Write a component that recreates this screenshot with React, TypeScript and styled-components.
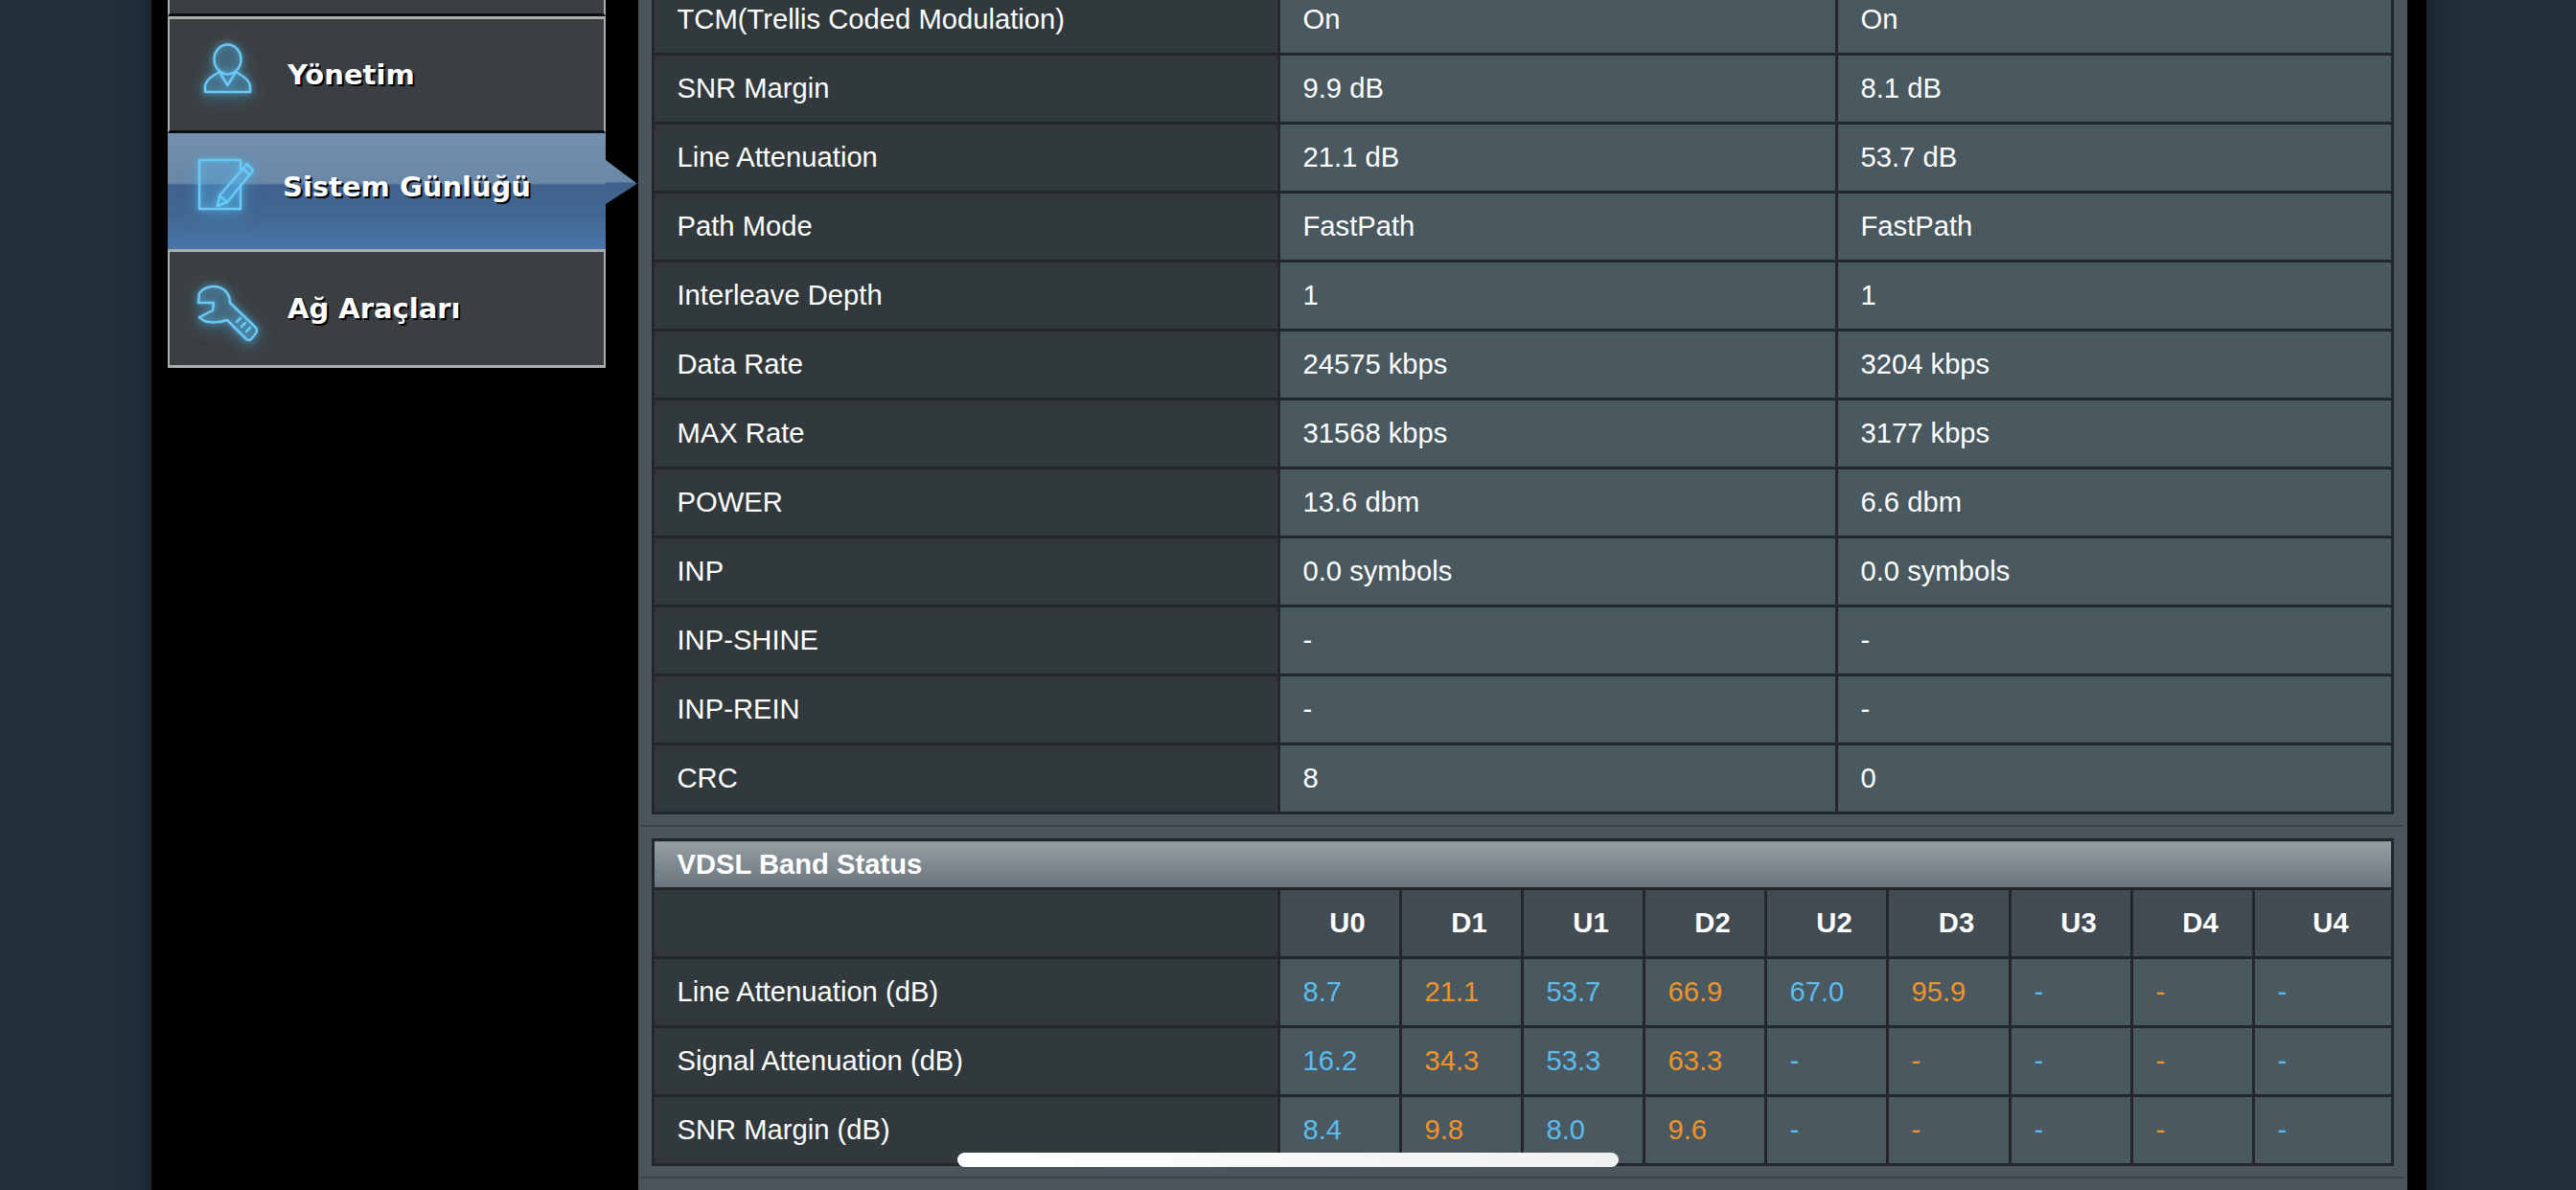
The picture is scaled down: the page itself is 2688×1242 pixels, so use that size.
import React from "react";
import styled, { createGlobalStyle } from "styled-components";

const GlobalStyle = createGlobalStyle`
  html, body {
    margin: 0;
    height: 1242px;
    overflow: hidden;
    background: #212f3a;
  }
`;

const statusRows = [
  ["TCM(Trellis Coded Modulation)", "On", "On"],
  ["SNR Margin", "9.9 dB", "8.1 dB"],
  ["Line Attenuation", "21.1 dB", "53.7 dB"],
  ["Path Mode", "FastPath", "FastPath"],
  ["Interleave Depth", "1", "1"],
  ["Data Rate", "24575 kbps", "3204 kbps"],
  ["MAX Rate", "31568 kbps", "3177 kbps"],
  ["POWER", "13.6 dbm", "6.6 dbm"],
  ["INP", "0.0 symbols", "0.0 symbols"],
  ["INP-SHINE", "-", "-"],
  ["INP-REIN", "-", "-"],
  ["CRC", "8", "0"],
];

const bands = ["U0", "D1", "U1", "D2", "U2", "D3", "U3", "D4", "U4"];

const bandRows = [
  ["Line Attenuation (dB)", "8.7", "21.1", "53.7", "66.9", "67.0", "95.9", "-", "-", "-"],
  ["Signal Attenuation (dB)", "16.2", "34.3", "53.3", "63.3", "-", "-", "-", "-", "-"],
  ["SNR Margin (dB)", "8.4", "9.8", "8.0", "9.6", "-", "-", "-", "-", "-"],
];

const statusCols = [653, 582, 580];
const bandCols = [653, 127, 127, 127, 127, 127, 128, 127, 127, 145];

const PersonIcon = () => (
  <IconSvg width="51" height="53" viewBox="0 0 51 53" $shift={-13}>
    <ellipse cx="25.5" cy="17" rx="14" ry="15.5" />
    <path d="M2 51V45C3 38 10 34 17 30L25.5 44L34 30C41 34 48 38 49 45V51Z" />
  </IconSvg>
);

const NoteIcon = () => (
  <IconSvg width="60" height="55" viewBox="0 0 60 55" $shift={-14}>
    <path d="M45 11V2H2V53H45V28" />
    <path d="M52 6L58 13L31 46L21 50L23 39Z" />
    <path d="M48 11L54 18M23 39L31 46" />
  </IconSvg>
);

const WrenchIcon = () => (
  <IconSvg width="64" height="60" viewBox="0 0 64 60" $shift={12}>
    <path d="M3 8C7 3 12 1 18 1C28 1 35 8 35 18L62 44Q64 47 62 50L57 56Q55 58 52 56L32 36C24 39 14 39 8 37L3 33L17 26L18 18L2 18Z" />
    <path d="M42 38L46 34M47 43L51 39M52 48L56 44" />
  </IconSvg>
);

const App = () => {
  return (
    <>
      <GlobalStyle />
      <Frame>
        <Sidebar>
          <MenuItem />
          <MenuItem>
            <IconSlot>
              <PersonIcon />
            </IconSlot>
            <MenuLabel>Yönetim</MenuLabel>
          </MenuItem>
          <MenuItem $active>
            <IconSlot>
              <NoteIcon />
            </IconSlot>
            <MenuLabel $active>Sistem Günlüğü</MenuLabel>
          </MenuItem>
          <MenuItem>
            <IconSlot>
              <WrenchIcon />
            </IconSlot>
            <MenuLabel>Ağ Araçları</MenuLabel>
          </MenuItem>
        </Sidebar>
        <Panel>
          <Section>
            <Table>
              <colgroup>
                {statusCols.map((w, i) => (
                  <col key={i} width={w} />
                ))}
              </colgroup>
              <tbody>
                {statusRows.map((row) => (
                  <tr key={row[0]}>
                    <LabelCell>{row[0]}</LabelCell>
                    <ValueCell>{row[1]}</ValueCell>
                    <ValueCell>{row[2]}</ValueCell>
                  </tr>
                ))}
              </tbody>
            </Table>
          </Section>
          <Section>
            <Table>
              <colgroup>
                {bandCols.map((w, i) => (
                  <col key={i} width={w} />
                ))}
              </colgroup>
              <thead>
                <tr>
                  <TitleCell colSpan={10}>VDSL Band Status</TitleCell>
                </tr>
                <tr>
                  <LabelCell />
                  {bands.map((b) => (
                    <HeadCell key={b}>{b}</HeadCell>
                  ))}
                </tr>
              </thead>
              <tbody>
                {bandRows.map((row) => (
                  <tr key={row[0]}>
                    <LabelCell>{row[0]}</LabelCell>
                    {row.slice(1).map((v, i) => (
                      <ValueCell key={i} $tone={i % 2 === 0 ? "up" : "down"}>
                        {v}
                      </ValueCell>
                    ))}
                  </tr>
                ))}
              </tbody>
            </Table>
          </Section>
          <ButtonRow>
            <ApplyButton />
          </ButtonRow>
        </Panel>
      </Frame>
      <ScrollBar />
    </>
  );
};

export default App;

const Frame = styled.div`
  display: flex;
  width: 2374px;
  height: 1400px;
  margin: -105px 0 0 158px;
  background: #000;
  box-shadow: 0 0 24px rgba(10, 18, 24, 0.55);
  font-family: "Liberation Sans", Arial, sans-serif;
`;

const Sidebar = styled.nav`
  flex: none;
  width: 508px;
  padding-left: 17px;
  box-sizing: border-box;
`;

const MenuItem = styled.div<{ $active?: boolean }>`
  position: relative;
  display: flex;
  align-items: center;
  box-sizing: border-box;
  width: 457px;
  height: ${(p) => (p.$active ? "121px" : "122px")};
  padding-left: ${(p) => (p.$active ? "29px" : "28px")};
  gap: 31px;
  background: ${(p) =>
    p.$active
      ? "linear-gradient(180deg, #7490ae 0%, #6a87a6 43%, #3f628c 45%, #426790 70%, #4a74a8 100%)"
      : "#3b3f42"};
  border: ${(p) => (p.$active ? "none" : "solid #a9afad")};
  border-width: 3px 2px 3px 2px;
  border-bottom-color: #0c0d0e;

  &:last-child {
    height: 124px;
    border-bottom-color: #a9afad;
  }

  ${(p) =>
    p.$active &&
    `
    &::after {
      content: "";
      position: absolute;
      left: 100%;
      top: 28px;
      width: 33px;
      height: 46px;
      background: linear-gradient(180deg, #6f8cab 0%, #6a87a6 50%, #3f628c 52%, #42668f 100%);
      clip-path: polygon(0 0, 100% 54%, 0 100%);
    }
  `}
`;

const IconSlot = styled.div`
  flex: none;
  display: flex;
  justify-content: center;
  width: 64px;
`;

const IconSvg = styled.svg<{ $shift: number }>`
  flex: none;
  margin-top: ${(p) => p.$shift}px;
  fill: rgba(90, 190, 240, 0.12);
  stroke: #6cc8f5;
  stroke-width: 2.5;
  stroke-linejoin: round;
  stroke-linecap: round;
  overflow: visible;
  filter: drop-shadow(0 0 3px rgba(90, 190, 240, 0.8)) drop-shadow(0 4px 8px rgba(70, 170, 230, 0.6));
`;

const MenuLabel = styled.span<{ $active?: boolean }>`
  margin: ${(p) => (p.$active ? "-9px 0 0 -4px" : "0")};
  font-family: "DejaVu Sans", Verdana, sans-serif;
  font-size: 29px;
  font-weight: 700;
  color: #fff;
  white-space: nowrap;
  text-shadow: 2px 2px 0 #000;
`;

const Panel = styled.main`
  flex: none;
  width: 1846px;
  padding-top: 88px;
  box-sizing: border-box;
  background: #4c555b;
`;

const Section = styled.section`
  padding: 0 15px 11px 12px;
  margin: 0 3px 0 2px;

  & + & {
    border-top: 2px solid #3d4549;
    padding-top: 12px;
  }
`;

const Table = styled.table`
  width: 1815px;
  table-layout: fixed;
  border-collapse: collapse;
  color: #fff;
  font-size: 29.2px;

  td,
  th {
    border: 3px solid #232729;
    padding: 0 0 0 23.5px;
    height: 69px;
    box-sizing: content-box;
    text-align: left;
    white-space: nowrap;
    overflow: hidden;
  }
`;

const LabelCell = styled.td`
  background: #32393c;
`;

const ValueCell = styled.td<{ $tone?: "up" | "down" }>`
  background: #4a595f;
  color: ${(p) =>
    p.$tone === "up" ? "#5bbcf0" : p.$tone === "down" ? "#f0932b" : "#fff"};
`;

const HeadCell = styled.th`
  background: #424c52;
  font-weight: 700;
  && {
    text-align: center;
    padding-left: 16px;
  }
`;

const TitleCell = styled.th`
  font-weight: 700;
  background: linear-gradient(180deg, #959fa2 0%, #69747e 100%);
  && {
    height: 48px;
  }
`;

const ButtonRow = styled.div`
  border-top: 2px solid #3d4549;
  margin: 0 3px 0 2px;
  padding-top: 12px;
  display: flex;
  justify-content: center;
`;

const ApplyButton = styled.div`
  width: 270px;
  height: 50px;
  border-radius: 6px;
  background: #8b9398;
`;

const ScrollBar = styled.div`
  position: fixed;
  left: 999px;
  top: 1203px;
  width: 690px;
  height: 15px;
  border-radius: 8px;
  background: linear-gradient(90deg, #fff 0%, #f0f0f0 100%);
`;
